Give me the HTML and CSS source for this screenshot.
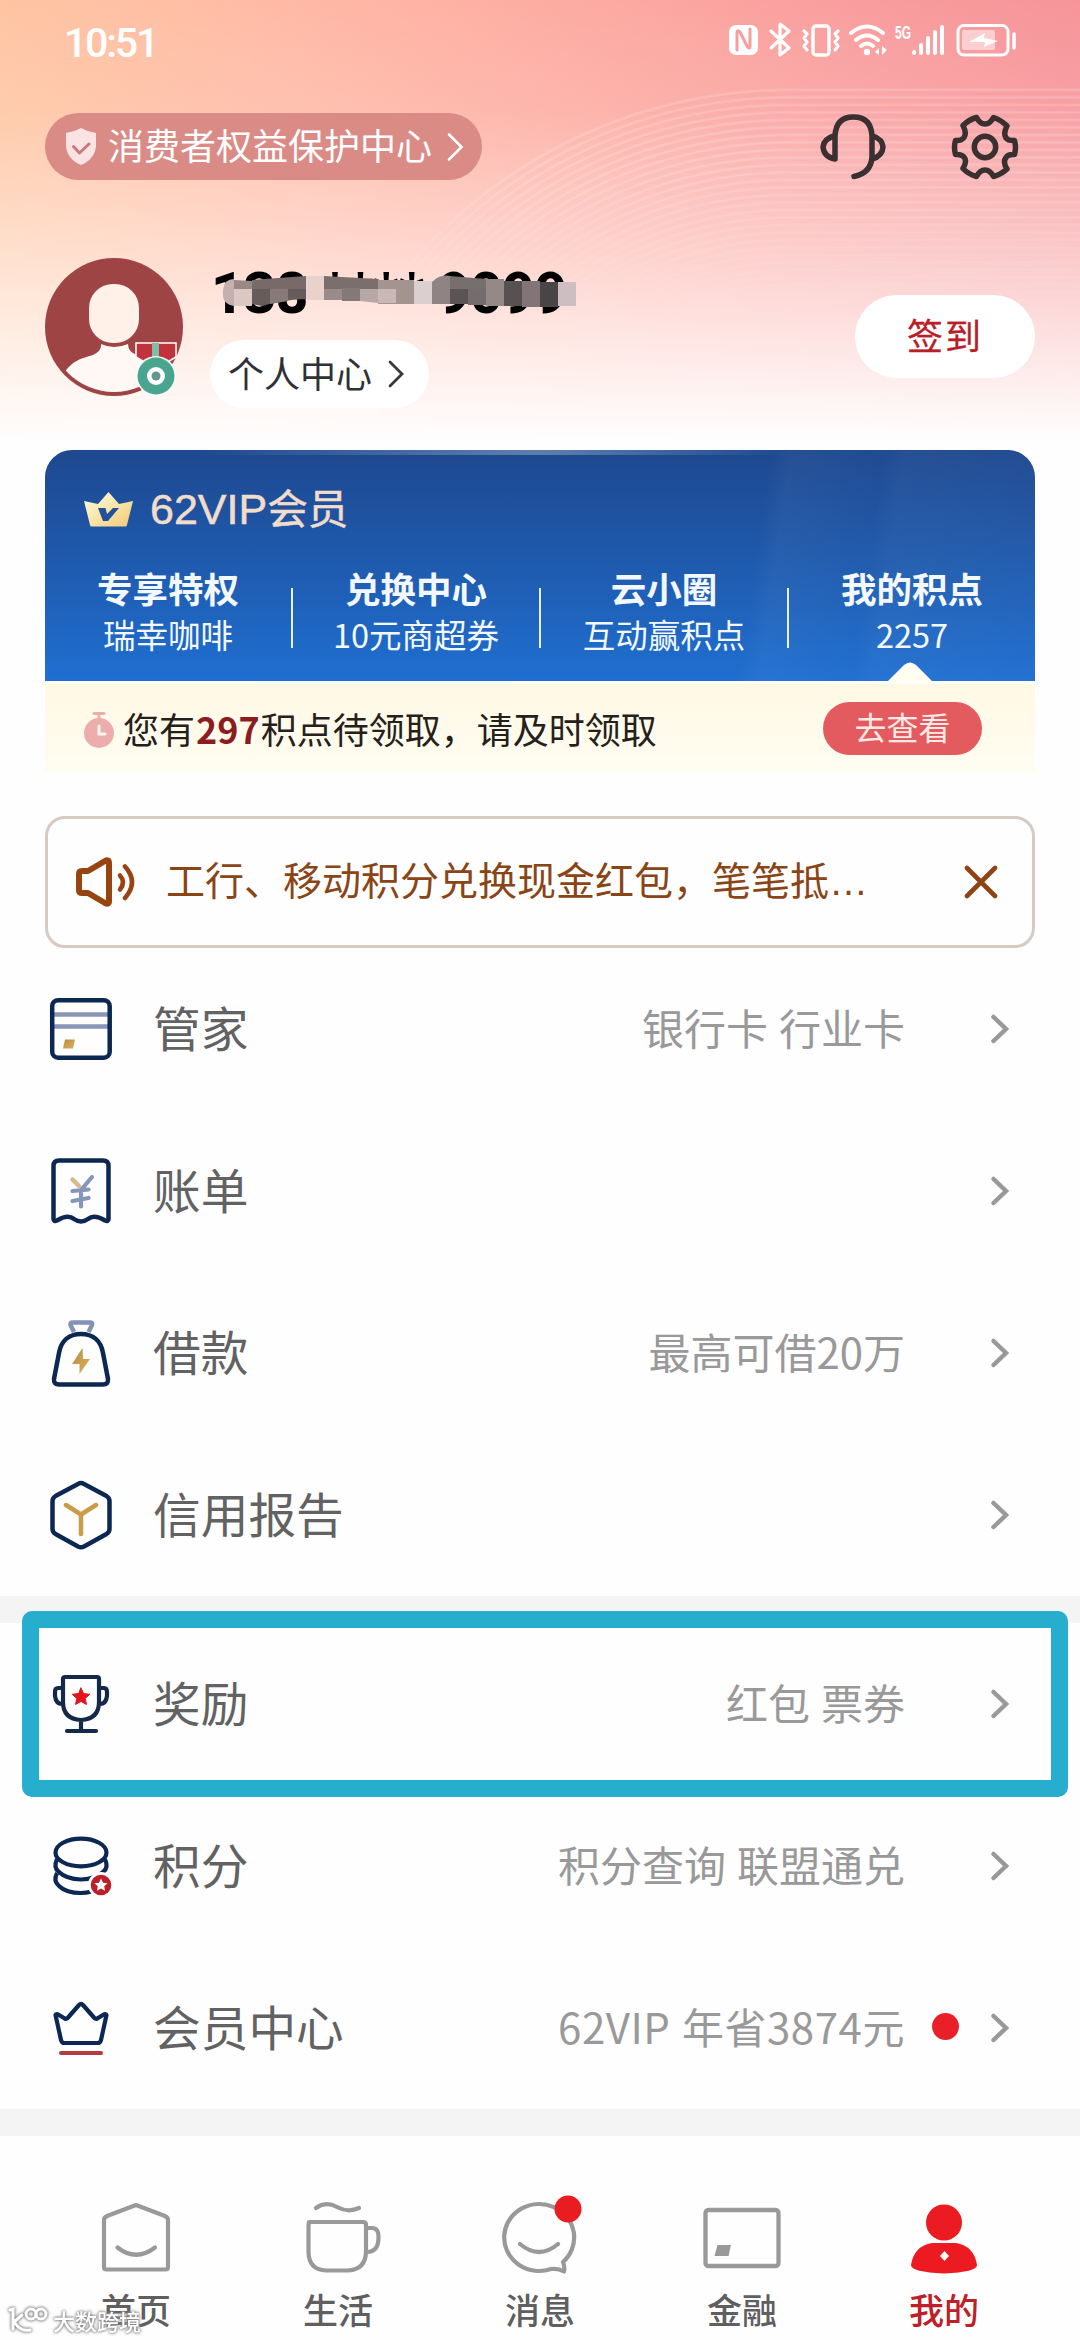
FILE: index.html
```html
<!DOCTYPE html>
<html lang="zh-CN">
<head>
<meta charset="utf-8">
<title>我的</title>
<link rel="stylesheet" href="styles.css">
</head>
<body>
<svg class="defs" width="0" height="0" aria-hidden="true">
  <defs>
    <linearGradient id="gold" x1="0" y1="0" x2="1" y2="1"><stop offset="0" stop-color="#b98d3c"/><stop offset="1" stop-color="#d9b264"/></linearGradient>
    <linearGradient id="crownGold" x1="0" y1="0" x2="1" y2="1"><stop offset="0" stop-color="#fffbe6"/><stop offset=".5" stop-color="#f8e6a8"/><stop offset="1" stop-color="#f0c878"/></linearGradient>
    <symbol id="chevron" viewBox="0 0 20 32"><path d="M3.500 4L16 16L3.500 28" fill="none" stroke="currentColor" stroke-width="4.500" stroke-linecap="round"/></symbol>
  </defs>
</svg>
<div class="phone">
  <header class="header">
    <div class="rings"></div>
    <div class="status">
      <span class="time">10:51</span>
      <svg class="status-icons" width="292" height="40" viewBox="728 21 292 40" fill="none" stroke="#fff" stroke-linecap="round" stroke-linejoin="round">
        <rect x="729" y="25" width="29" height="30" rx="7" fill="#fff" stroke="none"/>
        <path d="M737 50V33Q737 29 740 32L747 46Q750 50 750 46V29" stroke="#f79f9d" stroke-width="3"/>
        <path d="M771 31L789 48L780 55V24L789 31L771 48" stroke-width="3.200"/>
        <rect x="813" y="26" width="16" height="29" rx="3" stroke-width="3.400"/>
        <path d="M804 31L807 34L804 38L807 42L804 46L807 50M838 31L835 34L838 38L835 42L838 46L835 50" stroke-width="3.200"/>
        <path d="M851 33Q867 20 883 33M856 40Q867 31 878 40M861 46Q867 41 873 46" stroke-width="4"/>
        <circle cx="867" cy="52" r="3.200" fill="#fff" stroke="none"/>
        <path d="M875 52L879 48V55ZM887 50L882 46V55Z" fill="#fff" stroke="none"/>
        <path d="M914 52V53M921 45V53M928 38V53M935 32V53M942 27V53" stroke-width="4"/>
        <rect x="958" y="25.500" width="50" height="29.500" rx="6" stroke-width="3"/>
        <rect x="962" y="30" width="33" height="20" rx="2" fill="#fff" fill-opacity=".5" stroke="none"/>
        <path d="M969 42L985 33L984 38L998 41L984 47L985 42Z" fill="#fff" stroke="none"/>
        <path d="M1014 34V48" stroke-width="3.500"/>
        <text class="net" x="895" y="39" textLength="16" lengthAdjust="spacingAndGlyphs">5G</text>
      </svg>
    </div>
    <div class="topbar">
      <div class="rights">
        <svg width="30" height="37" viewBox="0 0 30 37"><path d="M15 0Q22 4 30 5V18Q29 31 15 37Q1 31 0 18V5Q8 4 15 0Z" fill="#fae3e2"/><path d="M7.500 18.500L13.500 25L23 16" fill="none" stroke="#c97b7b" stroke-width="3" stroke-linecap="round" stroke-linejoin="round"/></svg>
        <span>消费者权益保护中心</span>
        <svg width="17" height="30" viewBox="0 0 17 30"><path d="M2 2.500L14.500 15L2 27.500" fill="none" stroke="#fff" stroke-width="2.600" stroke-linecap="round"/></svg>
      </div>
      <div class="actions">
        <svg width="68" height="68" viewBox="0 0 68 68" fill="none" stroke="#39302f" stroke-width="5.500" stroke-linecap="round" stroke-linejoin="round"><path d="M16 46V23Q17 4 34.500 4Q52 4 53 23V44Q52 60 35 63.500M16 22.500Q4.500 26 4 34Q5 44 16 46M53 22.500Q63.500 26 64 34Q63.500 43 53 46"/></svg>
        <svg width="68" height="68" viewBox="0 0 68 68" fill="none" stroke="#39302f" stroke-width="5.500" stroke-linejoin="round"><path d="M25.500 4.500Q29 11 34 11Q39 11 42.500 4.500Q50 7 56 13Q52 20 55 25Q57.500 28 63.500 27.500Q65.500 34 63.500 41.500Q57 41 55 44.500Q51.500 49 56 56Q50 61.500 42.500 63.500Q39 57 34 57Q29 57 25.500 63.500Q17 61 12 55.500Q16.500 48 13 44Q10.500 41 4.500 41.500Q2.500 34 4.500 27.500Q10.500 28 13 24.500Q16 20 12 12.500Q18 6.500 25.500 4.500Z"/><circle cx="34" cy="34" r="10.700"/></svg>
      </div>
    </div>
    <div class="profile">
      <div class="avatar">
        <svg width="138" height="138" viewBox="0 0 138 138"><defs><clipPath id="face"><circle cx="69" cy="69" r="65"/></clipPath></defs><circle cx="69" cy="69" r="69" fill="#9f4444"/><rect x="44" y="26" width="50" height="59" rx="24" fill="#fff0e8"/><path clip-path="url(#face)" d="M0 138C26 108 22 104 48 97Q57 93 56 86Q69 92 83 86Q83 94 92 97C114 104 114 115 138 138Z" fill="#fff8f4"/></svg>
        <svg class="medal" width="44" height="56" viewBox="0 0 44 56"><path d="M2 2H42V16L32 22H12L2 16Z" fill="#c2323c" stroke="#fff" stroke-width="1.500"/><rect x="18" y="2" width="7" height="16" fill="#7dbfa8"/><circle cx="22" cy="35" r="20" fill="#f6fbf8"/><circle cx="22" cy="35" r="18.500" fill="#49a58f"/><circle cx="22" cy="35" r="9" fill="#fff"/><circle cx="22" cy="35" r="4.500" fill="#65968d"/></svg>
      </div>
      <div class="who">
        <div class="phone-no">138 **** 9099
          <svg class="mosaic" width="362" height="36" viewBox="220 274 362 36"><path fill="#c4b1af" d="M223 290Q224 279 234 279V306Q225 305 223 297Z"/><path fill="#9a8887" d="M234 280L252 281V289H234Z"/><path fill="#dac8c5" d="M234 289H252V306H234Z"/><path fill="#776a69" d="M252 280L306 276V289H252Z"/><path fill="#675b5b" d="M252 289H306V299Q280 300 262 306L252 304Z"/><path fill="#897978" d="M270 289H288V301L270 304Z"/><path fill="#e9d1cc" d="M306 276H324V300H306Z"/><path fill="#7b6f6e" d="M324 276L378 279V289H324Z"/><path fill="#9a8b89" d="M324 289H342V300H324Z"/><path fill="#857978" d="M342 288H360V301H342Z"/><path fill="#b8a8a5" d="M360 289H378V303L360 301Z"/><path fill="#a39490" d="M378 280H414V304H378Z"/><path fill="#c9b8b5" d="M378 289H396V303H378Z"/><path fill="#dccfd0" d="M414 281H432V304H414Z"/><path fill="#8f8483" d="M432 282Q440 274 450 276V304H432Z"/><path fill="#766f6e" d="M450 276L486 279V289H450Z"/><path fill="#5a5454" d="M450 289H468V304H450Z"/><path fill="#756c6e" d="M468 289H486V305H468Z"/><path fill="#948987" d="M486 279H504V306H486Z"/><path fill="#575151" d="M504 281H522V306H504Z"/><path fill="#817578" d="M522 281H540V307H522Z"/><path fill="#494445" d="M540 282H558V307H540Z"/><path fill="#cdbec2" d="M558 282H576V306H558Z"/></svg>
        </div>
        <div class="center-pill"><span>个人中心</span><svg width="17" height="30" viewBox="0 0 17 30"><path d="M2 3L14 15L2 27" fill="none" stroke="#36383c" stroke-width="2.800" stroke-linecap="round"/></svg></div>
      </div>
      <div class="sign">签到</div>
    </div>
  </header>

  <section class="vip">
    <div class="vip-card">
      <div class="vip-title">
        <svg width="49" height="35" viewBox="0 0 49 35"><path d="M0 9L14 12L24.500 0L35 12L49 9L43 33Q43 34.500 41 34.500H8Q6 34.500 6 33Z" fill="url(#crownGold)"/><path d="M14 16H21.500L23 22L29 16H35L24 29H19Z" fill="#22509b"/></svg>
        <span class="vip-name">62VIP<span class="vip-cn">会员</span></span>
      </div>
      <div class="perks">
        <div class="perk"><b>专享特权</b><span>瑞幸咖啡</span></div><i class="bar"></i>
        <div class="perk"><b>兑换中心</b><span>10元商超券</span></div><i class="bar"></i>
        <div class="perk"><b>云小圈</b><span>互动赢积点</span></div><i class="bar"></i>
        <div class="perk"><b>我的积点</b><span>2257</span></div>
      </div>
      <svg class="notch" width="44" height="20" viewBox="0 0 44 20"><path d="M0 20L16 4Q22 -1 28 4L44 20Z" fill="#fffef0"/></svg>
    </div>
    <div class="points">
      <svg width="30" height="36" viewBox="0 0 30 36"><path d="M10 1.500H20M15 1V7" stroke="#eab0ad" stroke-width="3" stroke-linecap="round"/><circle cx="15" cy="21" r="15" fill="#ebaeac"/><path d="M15 14V22H21" fill="none" stroke="#fff5f0" stroke-width="3" stroke-linecap="round" stroke-linejoin="round"/></svg>
      <span class="points-text">您有<b>297</b>积点待领取，请及时领取</span>
      <span class="view">去查看</span>
    </div>
  </section>

  <section class="notice">
    <svg width="62" height="50" viewBox="0 0 62 50" fill="none" stroke="#984411" stroke-linecap="round" stroke-linejoin="round"><path d="M5 17Q5 14 8 14H14L31 4Q35 2 35 6V44Q35 48 31 46L14 36H8Q5 36 5 33Z" stroke-width="6"/><path d="M46 18.500Q52 25 46 32.500" stroke-width="4.600"/><path d="M51 9.500Q65 25 51 41" stroke-width="4.600"/></svg>
    <span class="notice-text">工行、移动积分兑换现金红包，笔笔抵<span class="dots">…</span></span>
    <svg class="close" width="34" height="34" viewBox="0 0 34 34"><path d="M3 3L31 31M31 3L3 31" stroke="#8f4414" stroke-width="4.600" stroke-linecap="round"/></svg>
  </section>

  <main class="menu">
    <div class="row">
      <svg class="ico" viewBox="0 0 72 72" fill="none"><path d="M9 21.500H63M9 33.500H63" stroke="#8a96b8" stroke-width="4.500"/><rect x="7.200" y="7.200" width="57.500" height="57.500" rx="6" stroke="#0c2852" stroke-width="4.500"/><path d="M20 46.500H30L28 55.500H18Z" fill="url(#gold)"/></svg>
      <span class="label">管家</span><span class="hint">银行卡 行业卡</span><span class="slot"></span><svg class="go"><use href="#chevron"/></svg>
    </div>
    <div class="row">
      <svg class="ico" viewBox="0 0 72 72" fill="none" stroke-linecap="round" stroke-linejoin="round"><path d="M8.500 64V11Q8.500 5.500 14 5.500H58Q63.500 5.500 63.500 11V64Q63.500 67 60 65.500Q49 59 43 64Q36 69 29 64Q23 59 12 65.500Q8.500 67 8.500 64Z" stroke="#0c2852" stroke-width="4.500"/><path d="M27.500 24.500L34 31" stroke="#d8b98c" stroke-width="4.500"/><path d="M47 22L36 35M27.500 36L43.500 34.500M27.500 46L43.500 43M36 35V51.500" stroke="#8496ba" stroke-width="4.200"/></svg>
      <span class="label">账单</span><span class="hint"></span><span class="slot"></span><svg class="go"><use href="#chevron"/></svg>
    </div>
    <div class="row">
      <svg class="ico" viewBox="0 0 72 72" fill="none" stroke-linejoin="round"><path d="M29 15L25.500 8Q25 5.500 27.500 5.500H45Q48 5.500 47 8L43.500 15" stroke="#8393b6" stroke-width="4.500"/><path d="M36 17C24 17 16 24 14 36L9 62Q8.500 67.500 14 67.500H58Q63.500 67.500 63 62L58 36C56 24 48 17 36 17Z" stroke="#0c2852" stroke-width="4.500"/><path d="M37.500 31L27 47H34.500V57L45 42H38Z" fill="url(#gold)"/></svg>
      <span class="label">借款</span><span class="hint">最高可借20万</span><span class="slot"></span><svg class="go"><use href="#chevron"/></svg>
    </div>
    <div class="row">
      <svg class="ico" viewBox="0 0 72 72" fill="none" stroke-linecap="round" stroke-linejoin="round"><path d="M33 5Q36 3 39 5L61.500 17Q64.500 19 64.500 22V50Q64.500 53 61.500 55L39 67.500Q36 69 33 67.500L10.500 55Q7.500 53 7.500 50V22Q7.500 19 10.500 17Z" stroke="#0c2852" stroke-width="4.500"/><path d="M21 26L36 35.500L51 26M36 35.500V55" stroke="#c99c49" stroke-width="4.500"/></svg>
      <span class="label">信用报告</span><span class="hint"></span><span class="slot"></span><svg class="go"><use href="#chevron"/></svg>
    </div>
    <div class="gap"></div>
    <div class="row marked">
      <svg class="ico" viewBox="0 0 72 72" fill="none" stroke="#14294a" stroke-width="4.200" stroke-linecap="round" stroke-linejoin="round"><path d="M18 11Q18 9 20 9H52Q54 9 54 11V34Q54 51 36 52Q18 51 18 34ZM36 52V62M22 63H51M17 20H13Q10 20 10 24V28Q11 36 17 36M55 20H59Q62 20 62 24V28Q61 36 55 36"/><path d="M36 20L38.600 25.600L44.800 26.300L40.200 30.400L41.500 36.500L36 33.400L30.500 36.500L31.800 30.400L27.200 26.300L33.400 25.600Z" fill="#e3141d" stroke="#e3141d" stroke-width="1"/></svg>
      <span class="label">奖励</span><span class="hint">红包 票券</span><span class="slot"></span><svg class="go"><use href="#chevron"/></svg>
    </div>
    <div class="row">
      <svg class="ico" viewBox="0 0 72 72" fill="none" stroke="#0c2852" stroke-width="4.200"><ellipse cx="36" cy="22.500" rx="25.500" ry="13.800"/><path d="M12 29Q8 38 14 42Q21 49 36 49.500Q51 49 58 42Q64 38 60 29"/><path d="M12 43Q8 51 14 56Q21 63 36 63Q41 63 47 61.500"/><circle cx="56" cy="55" r="13" fill="#fff" stroke="none"/><circle cx="56" cy="55" r="10.300" fill="#bb2029" stroke="none"/><path d="M56 48.500L58 52.800L62.500 53.200L59.200 56.300L60 60.800L56 58.500L52 60.800L52.800 56.300L49.500 53.200L54 52.800Z" fill="#fff" stroke="none"/></svg>
      <span class="label">积分</span><span class="hint">积分查询 联盟通兑</span><span class="slot"></span><svg class="go"><use href="#chevron"/></svg>
    </div>
    <div class="row">
      <svg class="ico" viewBox="0 0 72 72" fill="none" stroke-linecap="round" stroke-linejoin="round"><path d="M10.500 23Q11 21 14 23L19 26Q21.500 28 23.500 25L34 13Q36 11 38 13L48.500 25Q50.500 28 53 26L58 23Q61 21 61.500 23L56 48Q55 51 53 51H19Q17 51 16 48Z" stroke="#0c2852" stroke-width="4.200"/><path d="M16 61H56" stroke="#b8393f" stroke-width="4"/></svg>
      <span class="label">会员中心</span><span class="hint spaced">62VIP 年省3874元</span><span class="slot"><i class="dot"></i></span><svg class="go"><use href="#chevron"/></svg>
    </div>
    <div class="gap last"></div>
  </main>

  <nav class="tabs">
    <div class="tab"><svg viewBox="0 0 84 84" fill="none" stroke="#999" stroke-width="4.200" stroke-linecap="round" stroke-linejoin="round"><path d="M42 13L71 24Q74 25.500 74 28V75Q74 77.500 71.500 77.500H12.500Q10 77.500 10 75V28Q10 25.500 13 24ZM23.500 55.500Q42 70 61 55.500"/></svg><span>首页</span></div>
    <div class="tab"><svg viewBox="0 0 84 84" fill="none" stroke="#999" stroke-width="4.200" stroke-linecap="round" stroke-linejoin="round"><path d="M13 30H67Q70 30 70 33V59Q70 78 51 78.500H30Q13 78 12.500 60V33Q12.500 30 15.500 30M70 36H77Q82.500 37 82.500 44Q83 60 71 60M20 16Q30 9 41 15T63 16"/></svg><span>生活</span></div>
    <div class="tab"><svg viewBox="0 0 84 84" fill="none" stroke="#999" stroke-width="4.200" stroke-linecap="round" stroke-linejoin="round"><path d="M65 70A35 33.500 0 1 0 53 77Q60 76 66 79.500Q67 75 65 70ZM22 52Q41 68 60 52"/><circle cx="70" cy="17" r="13.500" fill="#e91c22" stroke="none"/></svg><span>消息</span></div>
    <div class="tab"><svg viewBox="0 0 84 84" fill="none"><rect x="5.500" y="18" width="73" height="56" rx="3" stroke="#999" stroke-width="4.300"/><path d="M17.500 53H31L28.500 64H14.500Z" fill="#999"/></svg><span>金融</span></div>
    <div class="tab on"><svg viewBox="0 0 84 84" fill="#ec1a21"><circle cx="42" cy="30.500" r="18"/><path d="M30 51H54Q72 54 75 73Q75 80 42 81.500Q9 80 9 73Q12 54 30 51Z"/><path d="M42.500 59L47 64L42.500 69L38 64Z" fill="#fff"/></svg><span>我的</span></div>
  </nav>

  <div class="watermark">
    <svg width="42" height="30" viewBox="0 0 42 30" fill="none" stroke="#fff" stroke-width="3" stroke-linecap="round"><path d="M3 5L6 4V24M7 17L15 10M8 18Q14 27 23 25"/><circle cx="24" cy="9" r="5"/><circle cx="34" cy="9" r="5"/></svg>
    <span>大数跨境</span>
  </div>
</div>
</body>
</html>
```
FILE: styles.css
```css
*, *::after { box-sizing: border-box; }
body { margin: 0; font-family: "Noto Sans CJK SC", sans-serif; background: #fff; }
svg { display: block; flex: none; }
.defs { position: absolute; }
.phone { position: relative; width: 1080px; height: 2340px; overflow: hidden; background: #fefefe; }

.header {
  position: relative;
  height: 450px;
  background:
    linear-gradient(180deg, rgba(254,254,254,0) 0, rgba(255,250,246,.12) 110px, rgba(255,250,248,.42) 220px, rgba(255,252,250,.72) 330px, rgba(254,254,254,1) 440px),
    linear-gradient(90deg, #fec5a2 0, #ffbaa6 270px, #fdada2 540px, #f99d9e 860px, #f69499 100%);
}
.rings {
  position: absolute; left: 284px; right: 0; top: 84px; height: 506px;
  border-top-left-radius: 506px;
  background:
    repeating-radial-gradient(circle at 506px 506px, rgba(255,255,255,0) 0 3px, rgba(255,255,255,.2) 5px, rgba(255,255,255,0) 7.500px) 0 0 / 506px 506px no-repeat,
    repeating-linear-gradient(0deg, rgba(255,255,255,0) 0 3px, rgba(255,255,255,.2) 5px, rgba(255,255,255,0) 7.500px) 506px 0 / 290px 506px no-repeat;
  -webkit-mask-image: linear-gradient(180deg, #000 0, #000 80px, transparent 250px);
  mask-image: linear-gradient(180deg, #000 0, #000 80px, transparent 250px);
}
.status { position: relative; height: 82px; padding: 0 60px 0 64px; display: flex; align-items: center; justify-content: space-between; }
.time { font: 500 41px/50px Roboto, sans-serif; letter-spacing: -2.200px; color: #fff; padding-top: 3px; }
.net { font: 700 19px "Liberation Sans", sans-serif; fill: #fff; stroke: none; }
.topbar { position: relative; margin-top: 31px; height: 67px; padding: 0 61px 0 45px; display: flex; align-items: center; justify-content: space-between; }
.rights { width: 437px; height: 67px; border-radius: 34px; background: #da8b86; color: #fff; display: flex; align-items: center; padding: 0 17px 0 21px; font-size: 36px; line-height: 67px; }
.rights span { margin: -4px 15px 0 12px; }
.actions { display: flex; gap: 64px; }

.profile { position: relative; margin-top: 78px; padding: 0 45px; display: flex; height: 150px; }
.avatar { position: relative; width: 138px; height: 138px; }
.medal { position: absolute; left: 89px; top: 83px; }
.who { margin-left: 27px; flex: 1; }
.phone-no { position: relative; margin-left: 1px; height: 82px; font: 800 57px/72px Roboto, sans-serif; letter-spacing: -.600px; color: #000; white-space: nowrap; }
.mosaic { position: absolute; left: 9px; top: 16px; }
.center-pill { width: 219px; height: 68px; border-radius: 34px; background: #fff; color: #303136; font-size: 36px; line-height: 64px; display: flex; align-items: center; padding-left: 18px; gap: 16px; }
.center-pill span { margin-top: -4px; }
.sign { width: 180px; height: 83px; margin-top: 37px; border-radius: 42px; background: #fff; color: #b81d28; font-size: 36px; line-height: 79px; letter-spacing: 2px; text-align: center; -webkit-text-stroke: .3px #b81d28; }

.vip { width: 990px; margin: 0 auto; }
.vip-card {
  position: relative; height: 231px; padding: 28px 0 22px; border-radius: 27px 27px 0 0; overflow: hidden; color: #f3f8ff;
  background:
    linear-gradient(90deg, rgba(255,255,255,0) 15%, rgba(190,210,215,.4) 50%, rgba(255,255,255,0) 75%) 0 0 / 100% 5px no-repeat,
    linear-gradient(98deg, rgba(255,255,255,0) 71%, rgba(255,255,255,.04) 73%, rgba(255,255,255,.01) 82%, rgba(255,255,255,.04) 84%, rgba(255,255,255,.02) 100%),
    linear-gradient(180deg, #1e488f 0, #1f59ab 45%, #1f6fd1 100%);
}
.vip-title { height: 60px; padding-left: 39px; display: flex; align-items: center; gap: 17px; color: #f2ddcb; }
.vip-title svg { margin-top: 2px; }
.vip-name { font: 43px/58px "Liberation Sans", "Noto Sans CJK SC", sans-serif; -webkit-text-stroke: .5px #f2ddcb; }
.vip-cn { font: 400 40.500px/58px "Noto Sans CJK SC", sans-serif; }
.perks { margin-top: 29px; display: flex; }
.perk { flex: 1; display: flex; flex-direction: column; text-align: center; line-height: 46px; }
.perk b { font-size: 35.500px; margin-top: -2px; }
.perk span { font-size: 32.500px; line-height: 46px; }
.bar { width: 2px; height: 60px; margin-top: 21px; background: #e8f2ff; }
.notch { position: absolute; left: 843px; bottom: 0; }
.points { height: 92px; padding: 0 53px 0 39px; display: flex; align-items: center; border-top: 3px solid #fffffa; background: linear-gradient(180deg, #fff8e4, #fffdf2); }
.points svg { margin-top: 2px; }
.points-text { margin: -2px 0 0 9px; flex: 1; font-size: 36px; line-height: 50px; color: #26201a; white-space: nowrap; }
.points-text b { color: #8c1d1f; margin: 0 1px; }
.view { width: 159px; height: 53px; border-radius: 27px; background: #e35b5e; color: #ffeae6; font-size: 32px; line-height: 49px; text-align: center; }

.notice { width: 990px; height: 132px; margin: 43px auto 0; border: 3px solid #d7cac1; border-radius: 20px; background: #fefefe; display: flex; align-items: center; padding: 0 34px 0 26px; }
.notice-text { flex: 1; margin: -4px 0 0 30px; font-size: 39px; line-height: 56px; color: #894516; white-space: nowrap; }
.dots { font-family: "Liberation Sans", sans-serif; }

.row { position: relative; height: 162px; padding: 0 70px 0 45px; display: flex; align-items: center; }
.ico { width: 72px; height: 72px; }
.label { margin: -5px 0 0 36px; font-size: 47.700px; line-height: 70px; color: #626262; }
.hint { flex: 1; margin-top: -4px; font-size: 42px; line-height: 60px; color: #999; text-align: right; word-spacing: 1.500px; }
.spaced { letter-spacing: .550px; }
.slot { width: 85px; display: flex; justify-content: center; }
.dot { width: 27px; height: 27px; border-radius: 50%; background: #e92028; margin: -3px 4px 0 0; }
.go { width: 20px; height: 32px; color: #999; }
.gap { height: 27px; background: #f4f4f4; }
.marked::after { content: ""; position: absolute; left: 22px; top: -12px; width: 1046px; height: 186px; border: 17.500px solid #27aecf; border-radius: 10px; z-index: 2; }

.tabs { height: 204px; padding: 56px 35px 0; display: flex; }
.tab { flex: 1; display: flex; flex-direction: column; align-items: center; font-size: 35px; line-height: 50px; color: #5f5f5f; font-weight: 500; }
.tab svg { width: 84px; height: 84px; overflow: visible; }
.tab span { margin-top: 8px; }
.tab.on { color: #bd2028; }

.watermark { position: absolute; left: 7px; bottom: 5px; display: flex; align-items: center; gap: 4px; color: #fff; font-size: 22px; line-height: 30px; font-weight: 500; filter: drop-shadow(0 0 1.500px #777) drop-shadow(0 0 1px #aaa); }
```
